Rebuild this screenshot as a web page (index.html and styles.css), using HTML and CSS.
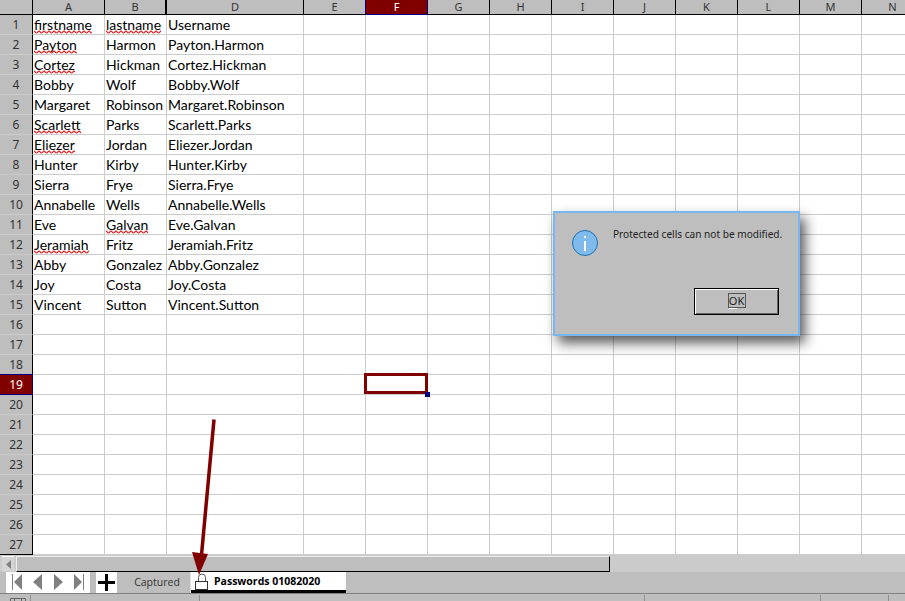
FILE: index.html
```html
<!DOCTYPE html>
<html lang="en">
<head>
    <meta charset="UTF-8">
    <meta name="viewport" content="width=device-width, initial-scale=1.0">
    <title>Passwords 01082020</title>
    <link rel="stylesheet" href="styles.css">
</head>
<body>

    <div class="sheet">
        <table class="grid">
            <colgroup>
                <col class="col-head"><col class="col-a"><col class="col-b"><col class="col-d">
                <col class="col-std"><col class="col-std"><col class="col-std"><col class="col-std"><col class="col-std">
                <col class="col-std"><col class="col-std"><col class="col-std"><col class="col-std"><col class="col-std">
            </colgroup>
            <thead>
                <tr>
                    <th></th><th>A</th><th class="before-hidden">B</th><th>D</th><th>E</th><th class="active">F</th><th>G</th><th>H</th><th>I</th><th>J</th><th>K</th><th>L</th><th>M</th><th>N</th>
                </tr>
            </thead>
            <tbody>
                <tr><th>1</th><td><span class="typo">firstname</span></td><td><span class="typo">lastname</span></td><td>Username</td><td></td><td></td><td></td><td></td><td></td><td></td><td></td><td></td><td></td><td></td></tr>
                <tr><th>2</th><td><span class="typo">Payton</span></td><td>Harmon</td><td>Payton.Harmon</td><td></td><td></td><td></td><td></td><td></td><td></td><td></td><td></td><td></td><td></td></tr>
                <tr><th>3</th><td><span class="typo">Cortez</span></td><td>Hickman</td><td>Cortez.Hickman</td><td></td><td></td><td></td><td></td><td></td><td></td><td></td><td></td><td></td><td></td></tr>
                <tr><th>4</th><td>Bobby</td><td>Wolf</td><td>Bobby.Wolf</td><td></td><td></td><td></td><td></td><td></td><td></td><td></td><td></td><td></td><td></td></tr>
                <tr><th>5</th><td>Margaret</td><td>Robinson</td><td>Margaret.Robinson</td><td></td><td></td><td></td><td></td><td></td><td></td><td></td><td></td><td></td><td></td></tr>
                <tr><th>6</th><td><span class="typo">Scarlett</span></td><td>Parks</td><td>Scarlett.Parks</td><td></td><td></td><td></td><td></td><td></td><td></td><td></td><td></td><td></td><td></td></tr>
                <tr><th>7</th><td><span class="typo">Eliezer</span></td><td>Jordan</td><td>Eliezer.Jordan</td><td></td><td></td><td></td><td></td><td></td><td></td><td></td><td></td><td></td><td></td></tr>
                <tr><th>8</th><td>Hunter</td><td>Kirby</td><td>Hunter.Kirby</td><td></td><td></td><td></td><td></td><td></td><td></td><td></td><td></td><td></td><td></td></tr>
                <tr><th>9</th><td>Sierra</td><td>Frye</td><td>Sierra.Frye</td><td></td><td></td><td></td><td></td><td></td><td></td><td></td><td></td><td></td><td></td></tr>
                <tr><th>10</th><td>Annabelle</td><td>Wells</td><td>Annabelle.Wells</td><td></td><td></td><td></td><td></td><td></td><td></td><td></td><td></td><td></td><td></td></tr>
                <tr><th>11</th><td>Eve</td><td><span class="typo">Galvan</span></td><td>Eve.Galvan</td><td></td><td></td><td></td><td></td><td></td><td></td><td></td><td></td><td></td><td></td></tr>
                <tr><th>12</th><td><span class="typo">Jeramiah</span></td><td>Fritz</td><td>Jeramiah.Fritz</td><td></td><td></td><td></td><td></td><td></td><td></td><td></td><td></td><td></td><td></td></tr>
                <tr><th>13</th><td>Abby</td><td>Gonzalez</td><td>Abby.Gonzalez</td><td></td><td></td><td></td><td></td><td></td><td></td><td></td><td></td><td></td><td></td></tr>
                <tr><th>14</th><td>Joy</td><td>Costa</td><td>Joy.Costa</td><td></td><td></td><td></td><td></td><td></td><td></td><td></td><td></td><td></td><td></td></tr>
                <tr><th>15</th><td>Vincent</td><td>Sutton</td><td>Vincent.Sutton</td><td></td><td></td><td></td><td></td><td></td><td></td><td></td><td></td><td></td><td></td></tr>
                <tr><th>16</th><td></td><td></td><td></td><td></td><td></td><td></td><td></td><td></td><td></td><td></td><td></td><td></td><td></td></tr>
                <tr><th>17</th><td></td><td></td><td></td><td></td><td></td><td></td><td></td><td></td><td></td><td></td><td></td><td></td><td></td></tr>
                <tr><th>18</th><td></td><td></td><td></td><td></td><td></td><td></td><td></td><td></td><td></td><td></td><td></td><td></td><td></td></tr>
                <tr><th class="active">19</th><td></td><td></td><td></td><td></td><td class="current"><span class="cursor"></span></td><td></td><td></td><td></td><td></td><td></td><td></td><td></td><td></td></tr>
                <tr><th>20</th><td></td><td></td><td></td><td></td><td></td><td></td><td></td><td></td><td></td><td></td><td></td><td></td><td></td></tr>
                <tr><th>21</th><td></td><td></td><td></td><td></td><td></td><td></td><td></td><td></td><td></td><td></td><td></td><td></td><td></td></tr>
                <tr><th>22</th><td></td><td></td><td></td><td></td><td></td><td></td><td></td><td></td><td></td><td></td><td></td><td></td><td></td></tr>
                <tr><th>23</th><td></td><td></td><td></td><td></td><td></td><td></td><td></td><td></td><td></td><td></td><td></td><td></td><td></td></tr>
                <tr><th>24</th><td></td><td></td><td></td><td></td><td></td><td></td><td></td><td></td><td></td><td></td><td></td><td></td><td></td></tr>
                <tr><th>25</th><td></td><td></td><td></td><td></td><td></td><td></td><td></td><td></td><td></td><td></td><td></td><td></td><td></td></tr>
                <tr><th>26</th><td></td><td></td><td></td><td></td><td></td><td></td><td></td><td></td><td></td><td></td><td></td><td></td><td></td></tr>
                <tr class="last-row"><th>27</th><td></td><td></td><td></td><td></td><td></td><td></td><td></td><td></td><td></td><td></td><td></td><td></td><td></td></tr>
            </tbody>
        </table>
    </div>

    <div class="scrollbar">
        <div class="scroll-btn">
            <svg width="5" height="9" viewBox="0 0 5 9"><path d="M5 0V9L0 4.5Z" fill="#808080"/></svg>
        </div>
        <div class="scroll-thumb"></div>
    </div>

    <div class="tabbar">
        <div class="tab-nav">
            <svg width="84" height="20" viewBox="0 0 84 20">
                <path d="M6 2h1v16H6zM16 2V18L8 10Z" fill="#808080"/>
                <path d="M36 2V18L27 10Z" fill="#808080"/>
                <path d="M48 2V18L57 10Z" fill="#808080"/>
                <path d="M68 2V18L76 10ZM77 2h1v16h-1z" fill="#808080"/>
            </svg>
        </div>
        <div class="tab-add">
            <svg width="17" height="17" viewBox="0 0 17 17"><path d="M7 0h3v7h7v3h-7v7H7v-7H0V7h7z" fill="#000"/></svg>
        </div>
        <div class="tab">Captured</div>
        <div class="tab tab-active">
            <svg class="lock" width="14" height="17" viewBox="0 0 14 17">
                <path d="M3.500 8V4.500a3.500 3.500 0 0 1 7 0V8" fill="none" stroke="#555"/>
                <rect x="0.500" y="8.500" width="12" height="8" fill="#fff" stroke="#333"/>
            </svg>
            <span>Passwords 01082020</span>
        </div>
    </div>

    <div class="statusbar">
        <div class="status-cell status-icon">
            <svg class="status-glyph" width="16" height="4" viewBox="0 0 16 4"><path d="M.5 4V.5h15V4M4.500 .5V4M11.500 .5V4" fill="none" stroke="#666"/></svg>
        </div>
        <div class="status-cell status-a"></div>
        <div class="status-cell status-b"></div>
        <div class="status-cell status-c"></div>
        <div class="status-cell status-d"></div>
    </div>

    <div class="dialog">
        <div class="dialog-body">
            <svg class="info-icon" width="26" height="26" viewBox="0 0 26 26">
                <circle cx="13" cy="13" r="12.500" fill="#7fbaec" stroke="#1f6fb4"/>
                <rect x="12" y="11" width="2" height="10" fill="#fff"/>
                <rect x="12" y="6" width="2" height="2" fill="#fff"/>
            </svg>
            <p class="dialog-text">Protected cells can not be modified.</p>
        </div>
        <div class="dialog-actions">
            <button class="ok-button"><span class="ok-label"><span class="mnemonic">O</span>K</span></button>
        </div>
    </div>

    <svg class="arrow" width="40" height="165" viewBox="0 0 40 165">
        <path d="M24 1.500 L11.500 137" stroke="#800000" stroke-width="3.500" fill="none"/>
        <path d="M2 134L18 136L9 157Z" fill="#800000"/>
    </svg>

</body>
</html>
```

FILE: styles.css
```css
body {
    margin: 0;
    height: 100vh;
    overflow: hidden;
    display: flex;
    flex-direction: column;
    background-color: #bebebe;
    color: #000;
    font-family: "Lato", "Liberation Sans", sans-serif;
}

/* sheet */
.sheet {
    flex: none;
    height: 555px;
    overflow: hidden;
    background-color: #fff;
}
.grid {
    table-layout: fixed;
    width: 924px;
    border-collapse: separate;
    border-spacing: 0;
}
.col-head { width: 33px; }
.col-a { width: 72px; }
.col-b { width: 62px; }
.col-d { width: 137px; }
.col-std { width: 62px; }

.grid th {
    padding: 0;
    background-color: #bebebe;
    font-family: "Noto Sans", sans-serif;
    font-weight: normal;
    font-size: 12px;
    color: #333;
    text-align: center;
}
.grid thead th {
    height: 15px;
    font-size: 11px;
    line-height: 14px;
    box-sizing: border-box;
    border-right: 1px solid #000;
    border-bottom: 1px solid #000;
}
.grid thead th.before-hidden {
    border-right-width: 2px;
}
.grid tbody th {
    height: 20px;
    box-sizing: border-box;
    border-right: 1px solid #000;
    border-bottom: 1px solid #ccc;
}
.grid tbody .last-row th {
    border-bottom-color: #000;
}
.grid th.active {
    background-color: #800000;
    color: #fff;
}
.grid thead th.active {
    border-right-color: #000080;
    border-bottom-color: #000080;
    box-shadow: -1px 0 0 #000080;
}
.grid tbody th.active {
    border-right-color: #000080;
    border-bottom-color: #000080;
    box-shadow: 0 -1px 0 #000080;
}
.grid td {
    height: 20px;
    box-sizing: border-box;
    padding: 0 0 0 1px;
    border-right: 1px solid #ccc;
    border-bottom: 1px solid #ccc;
    font-size: 14px;
    line-height: 19px;
    white-space: nowrap;
    overflow: hidden;
}
/* spell check squiggle, a repeating vector wave */
.typo {
    padding-bottom: 1px;
    background-image: url("data:image/svg+xml,%3Csvg xmlns='http://www.w3.org/2000/svg' width='5' height='4'%3E%3Cpath d='M0 1.200C1.200 1.200 1.300 3 2.500 3S3.800 1.200 5 1.200' fill='none' stroke='%23e02020' stroke-width='1.200'/%3E%3C/svg%3E");
    background-repeat: repeat-x;
    background-position: 0 100%;
}
.grid td.current {
    position: relative;
    overflow: visible;
}
.cursor {
    position: absolute;
    left: -2px;
    top: -2px;
    width: 64px;
    height: 21px;
    box-sizing: border-box;
    border: 3px solid #800000;
}
.cursor::after {
    content: "";
    position: absolute;
    right: -5px;
    bottom: -6px;
    width: 5px;
    height: 5px;
    background-color: #000080;
}

/* horizontal scrollbar */
.scrollbar {
    flex: none;
    height: 17px;
    display: flex;
    background-color: #cbcbcb;
    padding: 1px 0 0 2px;
    box-sizing: border-box;
}
.scroll-btn {
    width: 12px;
    height: 15px;
    display: flex;
    align-items: center;
    justify-content: center;
    background-color: #d4d4d4;
    border-top: 1px solid #fff;
    box-sizing: border-box;
}
.scroll-thumb {
    width: 594px;
    height: 16px;
    margin-left: 2px;
    box-sizing: border-box;
    background-color: #bebebe;
    border-top: 1px solid #eee;
    border-left: 1px solid #eee;
    border-right: 1px solid #000;
    border-bottom: 1px solid #000;
}

/* sheet tabs */
.tabbar {
    flex: none;
    height: 21px;
    display: flex;
    padding-left: 6px;
    background-color: #bebebe;
    border-bottom: 1px solid #808080;
}
.tab-nav {
    width: 84px;
    background-color: #fff;
}
.tab-add {
    width: 21px;
    margin-left: 6px;
    background-color: #fff;
    display: flex;
    align-items: center;
    justify-content: center;
}
.tab {
    font-family: "Open Sans", sans-serif;
    font-size: 10.500px;
    line-height: 21px;
    color: #333;
    width: 74px;
    padding-left: 7px;
    text-align: center;
    box-sizing: border-box;
    border-right: 1px solid #e0e0e0;
}
.tab-active {
    width: 155px;
    height: 21px;
    box-sizing: border-box;
    display: flex;
    padding-left: 4px;
    gap: 5px;
    background-color: #fff;
    border-right: 0;
    border-bottom: 3px solid #000;
    color: #000;
    font-weight: bold;
    line-height: 18px;
}
.lock {
    flex: none;
    margin-top: 1px;
}

/* status bar */
.statusbar {
    flex: 1;
    min-height: 0;
    overflow: hidden;
    display: flex;
    padding-top: 1px;
    background-color: #bebebe;
}
.status-cell {
    border-right: 1px solid #909090;
    box-sizing: border-box;
}
.status-icon {
    width: 31px;
    padding: 3px 0 0 10px;
}
.status-glyph {
    display: block;
}
.status-a { width: 169px; }
.status-b { width: 445px; }
.status-c { width: 176px; }
.status-d { width: 68px; }

/* message box */
.dialog {
    position: absolute;
    left: 553px;
    top: 211px;
    width: 247px;
    height: 125px;
    box-sizing: border-box;
    display: flex;
    flex-direction: column;
    justify-content: space-between;
    background-color: #bebebe;
    border: 2px solid #78b7f0;
    box-shadow: 5px 7px 12px rgba(0, 0, 0, 0.65);
}
.dialog-body {
    display: flex;
    gap: 15px;
    padding: 17px 0 0 17px;
}
.info-icon {
    flex: none;
}
.dialog-text {
    margin: -3px 0 0;
    font-family: "Noto Sans", sans-serif;
    font-size: 10.100px;
    line-height: 14px;
    color: #222;
}
.dialog-actions {
    display: flex;
    justify-content: flex-end;
    padding: 0 19px 19px 0;
}
.ok-button {
    width: 85px;
    height: 27px;
    padding: 0 0 2px;
    box-sizing: border-box;
    display: flex;
    align-items: center;
    justify-content: center;
    background-color: #bebebe;
    border: 1px solid #000;
    box-shadow: inset 1px 1px 0 #fff, inset -1px -1px 0 #666;
    font-family: "Noto Sans", sans-serif;
    font-size: 11px;
    color: #222;
}
.ok-label {
    display: block;
    width: 18px;
    height: 15px;
    line-height: 13px;
    box-sizing: border-box;
    border: 1px solid #555;
}
.mnemonic {
    border-bottom: 1px solid #fff;
}

/* annotation arrow */
.arrow {
    position: absolute;
    left: 190px;
    top: 418px;
}
```
